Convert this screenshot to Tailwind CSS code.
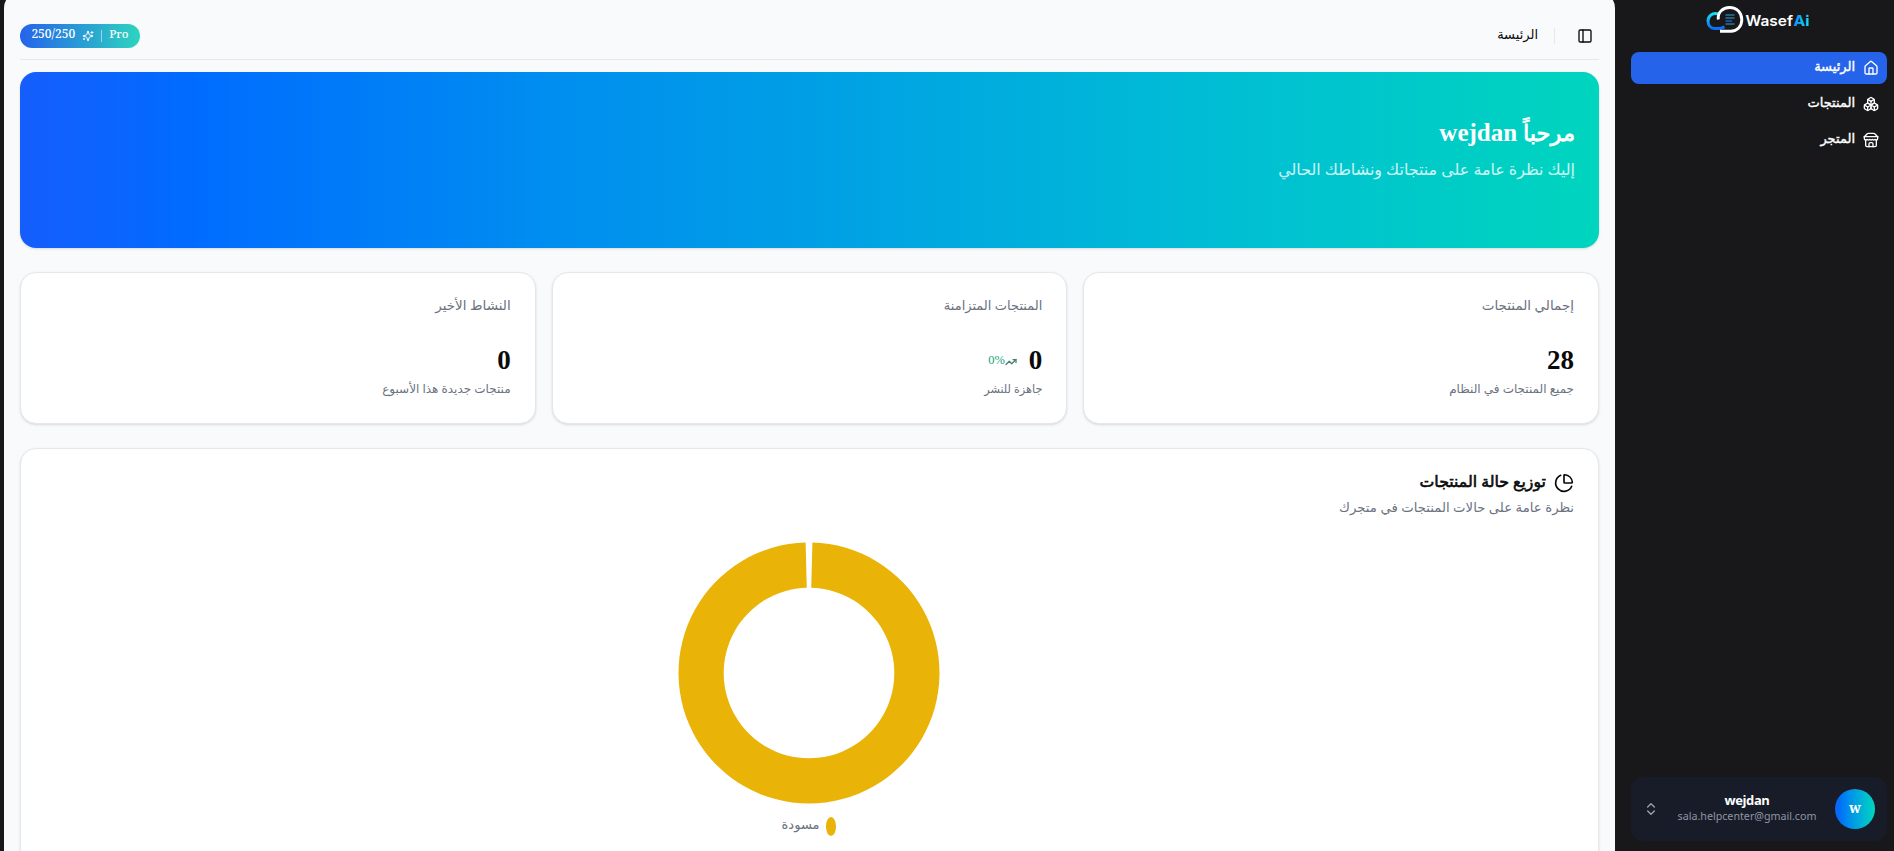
<!DOCTYPE html>
<html lang="ar" dir="rtl">
<head>
  <meta charset="UTF-8">
  <title>WasefAi</title>
  <meta name="viewport" content="width=device-width, initial-scale=1.0">
  <script src="https://cdn.jsdelivr.net/npm/@tailwindcss/browser@4"></script>
</head>
<body class="bg-[#18181b] h-screen overflow-hidden flex font-['Noto_Sans','DejaVu_Sans',sans-serif] text-[#0a0a0a]">
  <!-- Sidebar -->
  <aside class="w-[279px] shrink-0 h-screen flex flex-col pr-[7px] pl-4 pb-[10px] text-white">
    <div class="h-[52px] shrink-0 flex justify-center pt-[5px] pr-[1px]" dir="ltr">
      <svg class="w-[106px] h-[29px]" viewBox="0 0 106 29" fill="none">
        <defs>
          <linearGradient id="cloud" x1="0" y1="0" x2="0" y2="1">
            <stop offset="0" stop-color="#16e0f5"/>
            <stop offset="1" stop-color="#0b6cf5"/>
          </linearGradient>
          <linearGradient id="ai" x1="0" y1="0" x2="1" y2="0.3">
            <stop offset="0" stop-color="#0a84ff"/>
            <stop offset="1" stop-color="#12d8f5"/>
          </linearGradient>
        </defs>
        <path d="M12.500 9C6 7 2 11.500 2 16C2 20.500 5 23.600 9 23.600H14.500L18.500 21.800" stroke="url(#cloud)" stroke-width="3"/>
        <path d="M12.300 14.500C11.500 7 17 2.500 23.500 2.500C31 2.500 35.800 8 35.800 14.800C35.800 21.500 31 26.300 25 26.300H14" stroke="#fff" stroke-width="2.900"/>
        <path d="M19.500 10H28.500M19.500 13H28.500M19.500 19H28.500" stroke="#2aa6dc" stroke-width="1.200"/>
        <path d="M19.500 16H26" stroke="#1672f5" stroke-width="1.200"/>
        <text x="39.500" y="20.500" font-family="Inter, sans-serif" font-weight="600" font-size="14.500" fill="#fff" textLength="47.500" lengthAdjust="spacingAndGlyphs">Wasef</text>
        <text x="87.500" y="20.500" font-family="Inter, sans-serif" font-weight="700" font-size="14.500" fill="url(#ai)" textLength="16" lengthAdjust="spacingAndGlyphs">Ai</text>
      </svg>
    </div>
    <nav class="flex flex-col gap-1 text-[13px] leading-4 [-webkit-text-stroke:0.4px_currentColor]">
      <a class="h-8 rounded-lg bg-[#2563eb] flex items-center gap-2 px-2">
        <svg class="size-4" viewBox="0 0 24 24" fill="none" stroke="currentColor" stroke-width="2" stroke-linecap="round" stroke-linejoin="round"><path d="M15 21v-8a1 1 0 0 0-1-1h-4a1 1 0 0 0-1 1v8"/><path d="M3 10a2 2 0 0 1 .709-1.528l7-5.999a2 2 0 0 1 2.582 0l7 5.999A2 2 0 0 1 21 10v9a2 2 0 0 1-2 2H5a2 2 0 0 1-2-2z"/></svg>
        <span class="pb-1">الرئيسة</span>
      </a>
      <a class="h-8 rounded-lg flex items-center gap-2 px-2">
        <svg class="size-4" viewBox="0 0 24 24" fill="none" stroke="currentColor" stroke-width="2" stroke-linecap="round" stroke-linejoin="round"><path d="M2.970 12.920A2 2 0 0 0 2 14.630v3.240a2 2 0 0 0 .97 1.710l3 1.800a2 2 0 0 0 2.060 0L12 19v-5.500l-5-3-4.030 2.420Z"/><path d="m7 16.500-4.740-2.850"/><path d="m7 16.500 5-3"/><path d="M7 16.500v5.170"/><path d="M12 13.500V19l3.970 2.380a2 2 0 0 0 2.060 0l3-1.800a2 2 0 0 0 .97-1.710v-3.240a2 2 0 0 0-.97-1.710L17 10.500l-5 3Z"/><path d="m17 16.500-5-3"/><path d="m17 16.500 4.740-2.850"/><path d="M17 16.500v5.170"/><path d="M7.970 4.420A2 2 0 0 0 7 6.130v4.370l5 3 5-3V6.130a2 2 0 0 0-.97-1.710l-3-1.800a2 2 0 0 0-2.060 0l-3 1.800Z"/><path d="M12 8 7.260 5.150"/><path d="m12 8 4.740-2.850"/><path d="M12 13.500V8"/></svg>
        <span class="pb-1">المنتجات</span>
      </a>
      <a class="h-8 rounded-lg flex items-center gap-2 px-2">
        <svg class="size-4" viewBox="0 0 24 24" fill="none" stroke="currentColor" stroke-width="2" stroke-linecap="round" stroke-linejoin="round"><path d="m2 7 4.410-4.410A2 2 0 0 1 7.830 2h8.340a2 2 0 0 1 1.420.59L22 7"/><path d="M4 12v8a2 2 0 0 0 2 2h12a2 2 0 0 0 2-2v-8"/><path d="M15 22v-4a2 2 0 0 0-2-2h-2a2 2 0 0 0-2 2v4"/><path d="M2 7h20"/><path d="M22 7v3a2 2 0 0 1-2 2a2.700 2.700 0 0 1-1.590-.63.7.7 0 0 0-.82 0A2.700 2.700 0 0 1 16 12a2.700 2.700 0 0 1-1.590-.63.7.7 0 0 0-.82 0A2.700 2.700 0 0 1 12 12a2.700 2.700 0 0 1-1.590-.63.7.7 0 0 0-.82 0A2.700 2.700 0 0 1 8 12a2.700 2.700 0 0 1-1.590-.63.7.7 0 0 0-.82 0A2.700 2.700 0 0 1 4 12a2 2 0 0 1-2-2V7"/></svg>
        <span class="pb-1">المتجر</span>
      </a>
    </nav>
    <!-- Account -->
    <div class="mt-auto h-16 rounded-xl bg-[#181c29] flex items-center px-3">
      <div class="size-10 rounded-full bg-linear-to-l from-[#00d5be] to-[#155dfc] flex items-center justify-center text-sm font-bold pb-0.5 font-['Noto_Serif',serif]">w</div>
      <div class="flex-1 text-center pb-0.5">
        <div class="text-[13px] leading-[16px] font-bold font-['Open_Sans',sans-serif] tracking-[-0.4px]">wejdan</div>
        <div class="text-[10.700px] leading-[17px] text-[#9095a3]">sala.helpcenter@gmail.com</div>
      </div>
      <svg class="size-4 text-[#9ca3af]" viewBox="0 0 24 24" fill="none" stroke="currentColor" stroke-width="2" stroke-linecap="round" stroke-linejoin="round"><path d="m7 15 5 5 5-5"/><path d="m7 9 5-5 5 5"/></svg>
    </div>
  </aside>

  <!-- Page -->
  <main class="w-[1611px] shrink-0 -mt-2 rounded-t-2xl bg-[#f9fafb] px-4 overflow-hidden">
    <header class="h-[68px] border-b border-gray-200 pt-5 flex items-center">
      <svg class="size-4 mr-[6px]" viewBox="0 0 24 24" fill="none" stroke="currentColor" stroke-width="2" stroke-linecap="round" stroke-linejoin="round"><rect width="18" height="18" x="3" y="3" rx="2"/><path d="M9 3v18"/></svg>
      <span class="w-px h-4 bg-gray-200 mr-[22px]"></span>
      <span class="mr-4 text-[13px] leading-4 pb-1">الرئيسة</span>
      <div class="mr-auto w-[120px] h-6 rounded-full bg-linear-to-r/srgb from-[#2563eb] to-[#2dd4bf] text-white text-xs leading-4 font-medium flex items-center justify-center gap-[7px] font-['Noto_Serif','DejaVu_Sans_Condensed',sans-serif]" dir="ltr">
        <span class="pb-1">250/250</span>
        <svg class="size-3" viewBox="0 0 24 24" fill="none" stroke="currentColor" stroke-width="2" stroke-linecap="round" stroke-linejoin="round"><path d="M9.937 15.500A2 2 0 0 0 8.500 14.063l-6.135-1.582a.5.5 0 0 1 0-.962L8.500 9.936A2 2 0 0 0 9.937 8.500l1.582-6.135a.5.5 0 0 1 .963 0L14.063 8.500A2 2 0 0 0 15.500 9.937l6.135 1.581a.5.5 0 0 1 0 .964L15.500 14.063a2 2 0 0 0-1.437 1.437l-1.582 6.135a.5.5 0 0 1-.963 0z"/><path d="M20 3v4"/><path d="M22 5h-4"/><path d="M4 17v2"/><path d="M5 18H3"/></svg>
        <span class="w-px h-3 bg-white/50"></span>
        <span class="pb-1 text-[11.5px]">Pro</span>
      </div>
    </header>

    <section class="mt-3 h-44 rounded-2xl bg-[linear-gradient(to_right,#155dfc,#006cff_11%,#008df0_33%,#009fe5_50%,#00bfd3_77%,#00d5be)] shadow-sm text-white px-6 pt-[45px]">
      <h1 class="text-[22.5px] leading-8 [-webkit-text-stroke:0.8px_currentColor]">مرحباً <span class="text-[25px] leading-8 font-bold font-['Liberation_Serif',serif] [-webkit-text-stroke:0]">wejdan</span></h1>
      <p class="mt-2 text-[15.900px] leading-6 text-white/80">إليك نظرة عامة على منتجاتك ونشاطك الحالي</p>
    </section>

    <div class="mt-6 grid grid-cols-3 gap-4">
      <div class="h-[152px] rounded-2xl bg-white border border-gray-200 shadow-sm px-6 pt-[22px]">
        <p class="text-[13.5px] leading-5 text-[#6b7280]">إجمالي المنتجات</p>
        <p class="mt-[29px] text-[27px] leading-8 font-bold font-['Liberation_Serif',serif]">28</p>
        <p class="mt-[5px] text-xs leading-4 text-[#6b7280]">جميع المنتجات في النظام</p>
      </div>
      <div class="h-[152px] rounded-2xl bg-white border border-gray-200 shadow-sm px-6 pt-[22px]">
        <p class="text-[13px] leading-5 text-[#6b7280]">المنتجات المتزامنة</p>
        <div class="mt-[29px] flex items-center h-8">
          <span class="text-[27px] leading-8 font-bold font-['Liberation_Serif',serif]">0</span>
          <svg class="size-3 mr-[12px] mt-1 text-[#4a7c70]" viewBox="0 0 24 24" fill="none" stroke="currentColor" stroke-width="2.500" stroke-linecap="round" stroke-linejoin="round"><path d="M22 7 13.500 15.500l-5-5L2 17"/><path d="M16 7h6v6"/></svg>
          <span class="text-[12.5px] leading-4 text-[#16a37a] font-['Liberation_Serif',serif]" dir="ltr">0%</span>
        </div>
        <p class="mt-[5px] text-[11.25px] leading-4 text-[#6b7280]">جاهزة للنشر</p>
      </div>
      <div class="h-[152px] rounded-2xl bg-white border border-gray-200 shadow-sm px-6 pt-[22px]">
        <p class="text-[13.5px] leading-5 text-[#6b7280]">النشاط الأخير</p>
        <p class="mt-[29px] text-[27px] leading-8 font-bold font-['Liberation_Serif',serif]">0</p>
        <p class="mt-[5px] text-xs leading-4 text-[#6b7280]">منتجات جديدة هذا الأسبوع</p>
      </div>
    </div>

    <section class="mt-6 h-[440px] rounded-2xl bg-white border border-gray-200 shadow-sm px-6 pt-[18px]">
      <div class="flex items-center gap-2 h-7 pt-1">
        <svg class="size-5" viewBox="0 0 24 24" fill="none" stroke="currentColor" stroke-width="2" stroke-linecap="round" stroke-linejoin="round"><path d="M21 12c.552 0 1.005-.449.95-.998a10 10 0 0 0-8.953-8.951c-.55-.055-.998.398-.998.95v8a1 1 0 0 0 1 1z"/><path d="M21.210 15.890A10 10 0 1 1 8 2.830"/></svg>
        <h2 class="text-[15.75px] leading-5 pb-1 [-webkit-text-stroke:0.6px_currentColor]">توزيع حالة المنتجات</h2>
      </div>
      <p class="mt-0.5 text-[13.25px] leading-5 text-[#6b7280]">نظرة عامة على حالات المنتجات في متجرك</p>
      <div class="mt-[25px] flex flex-col items-center pr-px">
        <svg class="w-[262px] h-[262px]" viewBox="-131 -131 262 262">
          <path fill="#eab308" d="M3.410 -130.460A130.500 130.500 0 1 1 -3.410 -130.460L-2.230 -85.270A85.300 85.300 0 1 0 2.230 -85.270Z"/>
        </svg>
        <div class="mt-3 flex items-center gap-[7px]">
          <span class="w-[10px] h-[19px] rounded-[50%] bg-[#eab308]"></span>
          <span class="text-[13px] leading-4 text-[#6b7280] pb-1">مسودة</span>
        </div>
      </div>
    </section>
  </main>
</body>
</html>
